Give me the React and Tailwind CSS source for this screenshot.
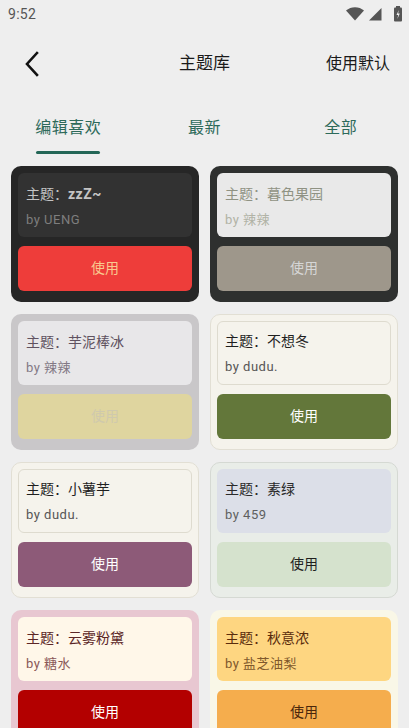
import React from "react";

const themes = [
  {
    name: "zzZ~", by: "UENG", bold: true,
    outer: "bg-[#262626] p-[7px]", inner: "bg-[#323232] px-[8px] pt-[11px]", title: "text-[#c4c4c4]", byc: "text-[#7e7e7e]",
    btn: "bg-[#ee3d3a]", btnText: "text-[#f9c98f]",
  },
  {
    name: "暮色果园", by: "辣辣",
    outer: "bg-[#2e302f] p-[7px]", inner: "bg-[#e9e9e9] px-[8px] pt-[11px]", title: "text-[#8f9283]", byc: "text-[#b1b3a6]",
    btn: "bg-[#9e978b]", btnText: "text-[#d6d6d6]",
  },
  {
    name: "芋泥棒冰", by: "辣辣",
    outer: "bg-[#c9c7c9] p-[7px]", inner: "bg-[#e8e7e9] px-[8px] pt-[11px]", title: "text-[#5f5260]", byc: "text-[#837985]",
    btn: "bg-[#dfd59f]", btnText: "text-[#cfc9ad]",
  },
  {
    name: "不想冬", by: "dudu.",
    outer: "bg-[#f5f3ec] border border-[#e2dfd4] p-[6px]", inner: "bg-[#f5f3ec] border border-[#dedbcf] px-[7px] pt-[9px]", title: "text-[#1f1f1f]", byc: "text-[#555555]",
    btn: "bg-[#63773a]", btnText: "text-white",
  },
  {
    name: "小薯芋", by: "dudu.",
    outer: "bg-[#f5f3ec] border border-[#e2dfd4] p-[6px]", inner: "bg-[#f5f3ec] border border-[#dedbcf] px-[7px] pt-[9px]", title: "text-[#1f1f1f]", byc: "text-[#555555]",
    btn: "bg-[#8d5a78]", btnText: "text-white",
  },
  {
    name: "素绿", by: "459",
    outer: "bg-[#e9ede8] border border-[#d5d9d3] p-[6px]", inner: "bg-[#dcdfe8] px-[8px] pt-[10px]", title: "text-[#2a2a2a]", byc: "text-[#5f5f5f]",
    btn: "bg-[#d5e2cd]", btnText: "text-[#1f1f1f]",
  },
  {
    name: "云雾粉黛", by: "糖水",
    outer: "bg-[#e8c7d1] p-[7px]", inner: "bg-[#fff7e9] px-[8px] pt-[11px]", title: "text-[#5b2626]", byc: "text-[#8a5757]",
    btn: "bg-[#b30000]", btnText: "text-white",
  },
  {
    name: "秋意浓", by: "盐芝油梨",
    outer: "bg-[#f9f7e7] p-[7px]", inner: "bg-[#fed681] px-[8px] pt-[11px]", title: "text-[#5a2c0c]", byc: "text-[#80582c]",
    btn: "bg-[#f5ad4d]", btnText: "text-[#4a260c]",
  },
];

function Card({ t }) {
  return (
    <div className={`h-[136px] rounded-[10px] flex flex-col gap-[9px] box-border ${t.outer}`}>
      <div className={`h-[64px] rounded-[6px] box-border shrink-0 ${t.inner}`}>
        <div className={`text-[14px] leading-[20px] ${t.title}`}>
          主题：{t.bold ? <span className="font-bold tracking-[0.5px]">{t.name}</span> : t.name}
        </div>
        <div className={`text-[13px] leading-[18px] mt-[7px] tracking-[0.5px] ${t.byc}`}>by {t.by}</div>
      </div>
      <div className={`h-[45px] rounded-[6px] shrink-0 flex items-center justify-center text-[14px] ${t.btn} ${t.btnText}`}>
        使用
      </div>
    </div>
  );
}

export default function App() {
  return (
    <div
      className="w-[409px] h-[728px] overflow-hidden bg-[#eeeeee] flex flex-col"
      style={{ fontFamily: 'Roboto, "Noto Sans CJK SC", sans-serif' }}
    >
      {/* status bar */}
      <div className="h-[28px] shrink-0 flex items-center justify-between pl-[8px] pr-[6px]">
        <span className="text-[14px] text-[#555555] tracking-[0.3px]">9:52</span>
        <div className="flex items-center gap-[3px]">
          <svg width="18" height="14" viewBox="0 0 18 14">
            <path d="M0 3.5 C5 -1 13 -1 18 3.5 L9 13.5 Z" fill="#555555" />
          </svg>
          <svg width="14" height="14" viewBox="0 0 14 14" className="ml-[1px]">
            <path d="M1 13.5 L13.5 1 L13.5 13.5 Z" fill="#555555" />
          </svg>
          <svg width="10" height="16" viewBox="0 0 10 16" className="ml-[8px]">
            <rect x="3" y="0" width="4" height="2" fill="#555555" />
            <rect x="1" y="1.5" width="8" height="14" rx="1" fill="#555555" />
            <path d="M5.8 4 L3.5 9 L5.2 9 L4.4 13 L6.8 7.5 L5.1 7.5 Z" fill="#eeeeee" />
          </svg>
        </div>
      </div>

      {/* header */}
      <div className="h-[72px] shrink-0 flex items-center justify-between pl-[24px] pr-[19px] relative">
        <svg width="16" height="26" viewBox="0 0 16 26">
          <polyline points="13,2 3,13 13,24" fill="none" stroke="#111111" strokeWidth="2.6" strokeLinecap="square" />
        </svg>
        <span className="absolute left-1/2 -translate-x-1/2 text-[17px] text-[#1a1a1a]">主题库</span>
        <span className="text-[16px] text-[#1a1a1a]">使用默认</span>
      </div>

      {/* tabs */}
      <div className="grid grid-cols-3 h-[56px] shrink-0">
        {["编辑喜欢", "最新", "全部"].map((tab, i) => (
          <div key={tab} className="flex flex-col items-center pt-[17px]">
            <span className="text-[16px] leading-[22px] text-[#2d6a5a] tracking-[0.5px]">{tab}</span>
            {i === 0 && <div className="mt-[12px] w-[64px] h-[3px] rounded-full bg-[#236656]" />}
          </div>
        ))}
      </div>

      {/* grid */}
      <div className="grid grid-cols-2 gap-x-[11px] gap-y-[12px] px-[11px] pt-[10px]">
        {themes.map((t) => (
          <Card key={t.name} t={t} />
        ))}
      </div>
    </div>
  );
}
